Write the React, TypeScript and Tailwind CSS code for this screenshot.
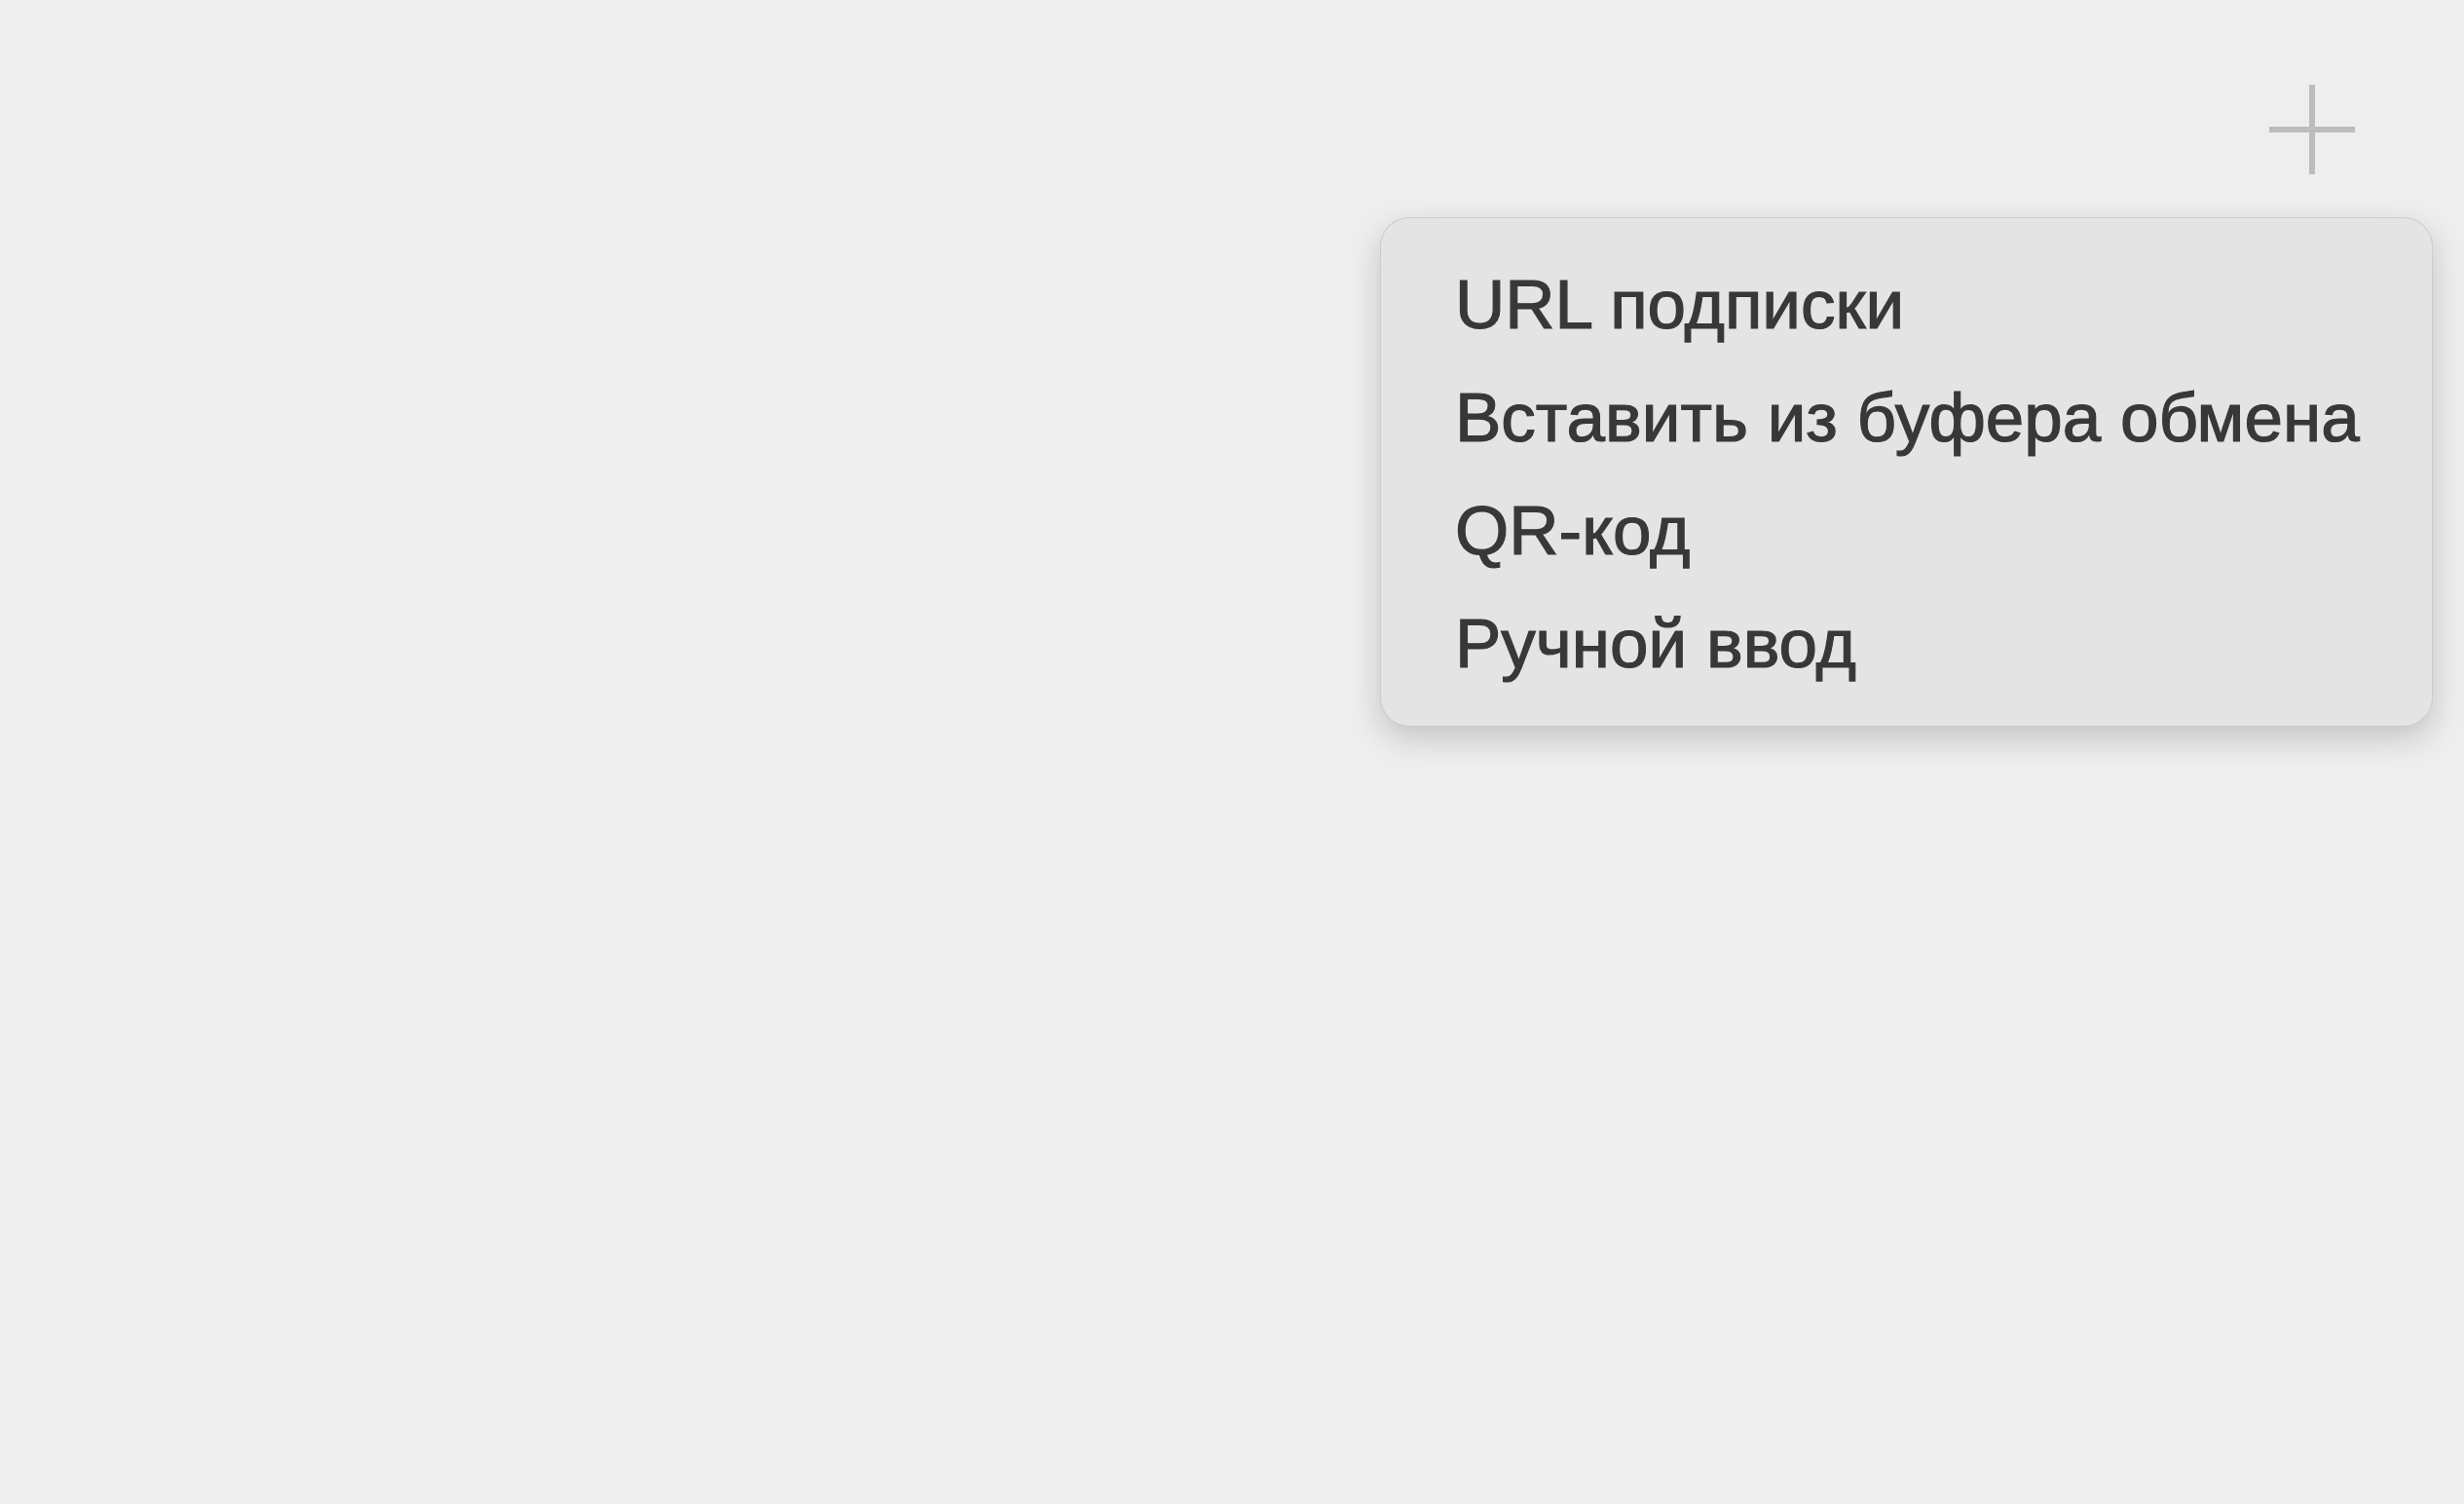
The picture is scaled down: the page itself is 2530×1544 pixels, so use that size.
export default function App() {
  const items = ["URL подписки", "Вставить из буфера обмена", "QR-код", "Ручной ввод"];

  return (
    <div
      className="relative w-full h-[1544px] overflow-hidden bg-[#eeeeee]"
      style={{ fontFamily: '"Liberation Sans", Arial, sans-serif' }}
    >
      {/* toolbar */}
      <div className="flex justify-end pt-[85px] pr-[111px]">
        <button className="w-[90px] h-[96px] flex items-center justify-center">
          <svg width="90" height="96" viewBox="0 0 90 96" fill="none">
            <line x1="45" y1="2" x2="45" y2="94" stroke="#bcbcbc" strokeWidth="6" />
            <line x1="1" y1="48" x2="89" y2="48" stroke="#bcbcbc" strokeWidth="6" />
          </svg>
        </button>
      </div>

      {/* dropdown menu */}
      <div className="absolute top-[223px] right-[32px] w-[1081px] rounded-[30px] border border-black/10 bg-[#e4e4e4] pl-[76px] pr-[40px] pt-[31px] pb-[26px] shadow-[0_12px_32px_rgba(0,0,0,0.18)]">
        <ul className="flex flex-col">
          {items.map((item) => (
            <li
              key={item}
              className="h-[116px] leading-[116px] text-[71px] text-[#383838] whitespace-nowrap [-webkit-text-stroke:1.2px_#383838]"
            >
              {item}
            </li>
          ))}
        </ul>
      </div>
    </div>
  );
}
